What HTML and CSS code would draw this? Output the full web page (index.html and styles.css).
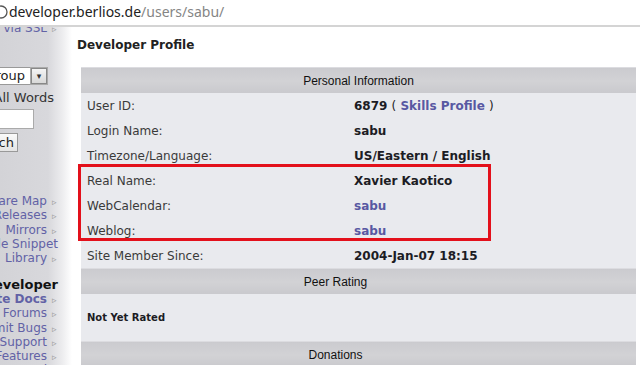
FILE: index.html
```html
<!DOCTYPE html>
<html lang="en">
<head>
    <meta charset="UTF-8">
    <title>BerliOS Developer: Developer Profile</title>
    <link rel="stylesheet" href="styles.css">
</head>
<body>

    <div class="urlbar">
        <svg class="url-icon" width="8" height="14" viewBox="0 0 8 14"><circle cx="1" cy="7" r="6" fill="none" stroke="#555" stroke-width="1.3"/></svg>
        <span class="url-host">developer.berlios.de</span><span class="url-path">/users/sabu/</span>
    </div>

    <div class="page">
        <aside class="sidebar">
            <div class="side-inner">
                <div class="side-link">Login via SSL<span class="arr">&#9657;</span></div>
                <div class="side-select"><span class="sel-text">Group</span><span class="sel-btn">&#9662;</span></div>
                <div class="side-text">Require All Words</div>
                <div class="side-input"></div>
                <div class="side-button">Search</div>

                <div class="side-link gap">Software Map<span class="arr">&#9657;</span></div>
                <div class="side-link">New Releases<span class="arr">&#9657;</span></div>
                <div class="side-link">Mirrors<span class="arr">&#9657;</span></div>
                <div class="side-link">Code Snippet</div>
                <div class="side-link">Library<span class="arr">&#9657;</span></div>

                <div class="side-title">Developer</div>
                <div class="side-link strong">Site Docs<span class="arr">&#9657;</span></div>
                <div class="side-link">Forums<span class="arr">&#9657;</span></div>
                <div class="side-link">Submit Bugs<span class="arr">&#9657;</span></div>
                <div class="side-link">Support<span class="arr">&#9657;</span></div>
                <div class="side-link">Features<span class="arr">&#9657;</span></div>
                <div class="side-link">Wanted<span class="arr">&#9657;</span></div>
            </div>
        </aside>

        <main class="content">
            <h1>Developer Profile</h1>

            <div class="profile">
                <table class="info">
                    <tr><th colspan="2">Personal Information</th></tr>
                    <tr><td class="label">User ID:</td><td class="value">6879 <span class="paren">(</span> <a href="#">Skills Profile</a> <span class="paren">)</span></td></tr>
                    <tr><td class="label">Login Name:</td><td class="value">sabu</td></tr>
                    <tr><td class="label">Timezone/Language:</td><td class="value">US/Eastern / English</td></tr>
                    <tr><td class="label">Real Name:</td><td class="value">Xavier Kaotico</td></tr>
                    <tr><td class="label">WebCalendar:</td><td class="value"><a href="#">sabu</a></td></tr>
                    <tr><td class="label">Weblog:</td><td class="value"><a href="#">sabu</a></td></tr>
                    <tr><td class="label">Site Member Since:</td><td class="value">2004-Jan-07 18:15</td></tr>
                    <tr><th colspan="2" class="th-off">Peer Rating</th></tr>
                    <tr class="rating"><td colspan="2">Not Yet Rated</td></tr>
                    <tr><th colspan="2" class="th-off">Donations</th></tr>
                </table>
                <div class="highlight"></div>
            </div>
        </main>
    </div>

</body>
</html>
```

FILE: styles.css
```css
body {
    margin: 0;
    padding: 0;
    background: #fff;
    font-family: "DejaVu Sans", Verdana, sans-serif;
    color: #333;
    overflow: hidden;
}
a {
    color: #5858a2;
    text-decoration: none;
    font-weight: bold;
}

/* address bar */
.urlbar {
    display: flex;
    align-items: center;
    font-family: "Noto Sans", "Open Sans", sans-serif;
    font-size: 14px;
    border-bottom: 2px solid #d4d4d4;
    box-sizing: border-box;
    height: 27px;
    padding-bottom: 2px;
}
.url-icon {
    margin-right: 1px;
}
.url-host {
    color: #222;
}
.url-path {
    color: #858585;
}

/* layout */
.page {
    display: flex;
    height: 338px;
}

/* left menu */
.sidebar {
    width: 72px;
    flex: none;
    overflow: hidden;
    background: linear-gradient(to right, #d3d3d7 0, #d8d8dc 48px, #ececee 62px, #fff 72px);
}
.side-inner {
    width: 200px;
    margin-left: -128px;
    margin-top: -6px;
    text-align: right;
    font-size: 12px;
    white-space: nowrap;
}
.side-link {
    color: #6262a6;
    height: 14.2px;
    line-height: 14px;
    padding-right: 14px;
}
.side-link.gap {
    margin-top: 42px;
}
.side-link.strong {
    font-weight: bold;
}
.arr {
    display: inline-block;
    width: 6px;
    margin-left: 5px;
    font-size: 9px;
    line-height: 9px;
    font-weight: normal;
    color: #999;
    text-align: left;
}
.side-select {
    display: flex;
    justify-content: flex-end;
    align-items: center;
    margin: 32px 24px 0 0;
    height: 18px;
}
.sel-text {
    font-size: 13px;
    color: #222;
    background: #fff;
    border: 1px solid #999;
    border-right: none;
    height: 16px;
    line-height: 16px;
    padding: 0 5px 0 40px;
}
.sel-btn {
    width: 14px;
    height: 14px;
    line-height: 14px;
    font-size: 9px;
    text-align: center;
    color: #333;
    background: linear-gradient(#f4f4f4, #d8d8d8);
    border: 1px solid #888;
    outline: 1px solid #aaa;
    margin: 0 1px;
}
.side-text {
    font-size: 13px;
    color: #333;
    line-height: 16px;
    margin-top: 5px;
    padding-right: 18px;
}
.side-input {
    width: 100px;
    height: 18px;
    border: 1px solid #aaa;
    background: #fff;
    margin: 3px 38px 0 auto;
}
.side-button {
    display: inline-block;
    font-size: 13px;
    color: #222;
    border: 1px solid #999;
    background: linear-gradient(#fafafa, #e4e4e4);
    height: 17px;
    line-height: 17px;
    padding: 0 3px 0 10px;
    margin: 4px 54px 0 0;
}
.side-title {
    font-weight: bold;
    color: #111;
    font-size: 13px;
    line-height: 14px;
    margin-top: 13px;
    padding-right: 14px;
}

/* main */
.content {
    flex: 1;
    padding: 10px 4px 0 5px;
}
h1 {
    margin: 0;
    font-size: 12px;
    line-height: 16px;
    color: #222;
}
.profile {
    position: relative;
    margin: 14px 0 0 4px;
}
.info {
    width: 555px;
    border-collapse: collapse;
    background: #e9eaee;
}
.info th {
    height: 25px;
    padding: 0;
    font-family: "Liberation Sans", Arial, sans-serif;
    font-size: 12px;
    font-weight: normal;
    color: #111;
    text-align: center;
    background: linear-gradient(#cbcbcf, #d2d2d5 50%, #c9c9cd);
    border-top: 1px solid #dcdce0;
}
.info th.th-off {
    padding-right: 46px;
}
.info td {
    height: 25px;
    padding: 0 0 0 6px;
    font-size: 12px;
}
.info td.label {
    width: 261px;
    color: #3a3a3a;
}
.info td.value {
    font-weight: bold;
    color: #1c1c24;
}
.paren {
    font-weight: normal;
}
.rating td {
    height: 47px;
    font-weight: bold;
    font-size: 10px;
    color: #1c1c24;
}

/* annotation frame */
.highlight {
    position: absolute;
    left: -3px;
    top: 97px;
    width: 407px;
    height: 71px;
    border: 3px solid #e3101b;
}
```
